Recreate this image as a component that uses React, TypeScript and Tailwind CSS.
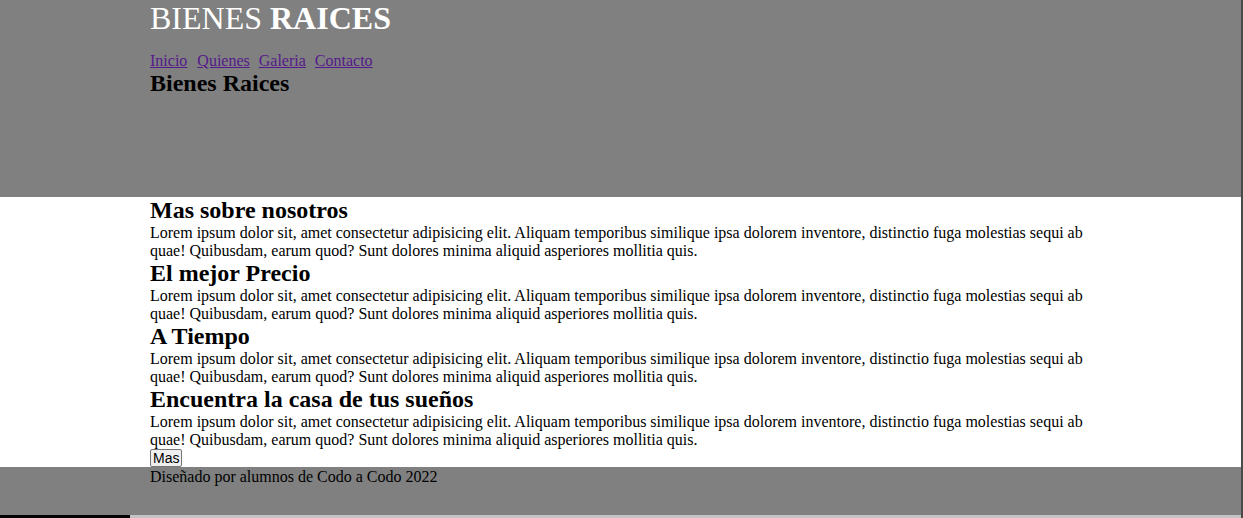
import React from 'react';

const SECTIONS = [
  'Mas sobre nosotros',
  'El mejor Precio',
  'A Tiempo',
  'Encuentra la casa de tus sueños',
];

const LOREM =
  'Lorem ipsum dolor sit, amet consectetur adipisicing elit. Aliquam temporibus similique ipsa dolorem inventore, distinctio fuga molestias sequi ab quae! Quibusdam, earum quod? Sunt dolores minima aliquid asperiores mollitia quis.';

export default function App() {
  return (
    <div className="w-[1243px] h-[518px] overflow-hidden bg-white text-black font-['Liberation_Serif',serif] flex flex-col border-r-2 border-[#4a4a4a]">
      {/* Header */}
      <header className="bg-[#808080] h-[197px] px-[150px] shrink-0">
        <h1 className="text-[32px] leading-[36px] text-white">
          BIENES <span className="font-bold">RAICES</span>
        </h1>
        <nav className="mt-4 flex gap-[9px] text-[16px] leading-[18px]">
          <a href="#" className="underline text-[#551a8b] mr-[1px]">Inicio</a>
          <a href="#" className="underline text-[#551a8b]">Quienes</a>
          <a href="#" className="underline text-[#551a8b]">Galeria</a>
          <a href="#" className="underline text-[#551a8b]">Contacto</a>
        </nav>
        <h2 className="text-[24px] leading-[27px] font-bold">Bienes Raices</h2>
      </header>

      {/* Main */}
      <main className="px-[150px] h-[270px] shrink-0 pr-[148px]">
        {SECTIONS.map((title) => (
          <section key={title}>
            <h2 className="text-[24px] leading-[27px] font-bold">{title}</h2>
            <p className="text-[16px] leading-[18px]">{LOREM}</p>
          </section>
        ))}
        <button className="block px-[2px] h-[18px] text-[14px] leading-[16px] font-['Liberation_Sans',sans-serif] bg-[#efefef] border border-[#767676] rounded-[2px]">
          Mas
        </button>
      </main>

      {/* Footer */}
      <footer className="bg-[#808080] flex-1 flex flex-col">
        <p className="px-[150px] pt-[1px] text-[16px] leading-[18px] flex-1">
          Diseñado por alumnos de Codo a Codo 2022
        </p>
        <div className="h-[3px] flex">
          <div className="w-[130px] bg-black" />
          <div className="flex-1 bg-[#c4c4c4]" />
        </div>
      </footer>
    </div>
  );
}
